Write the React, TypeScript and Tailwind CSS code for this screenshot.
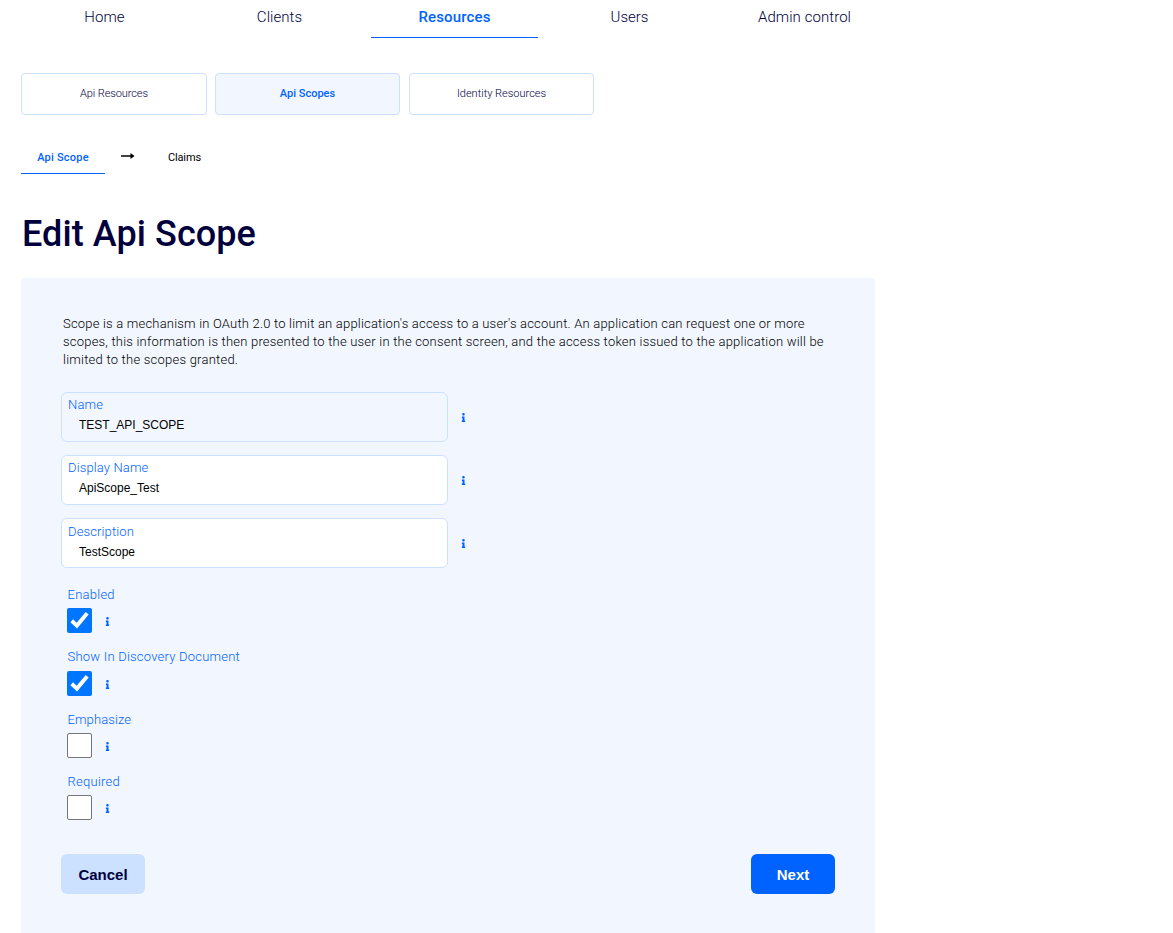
import { FaInfo } from 'react-icons/fa';

const tabs = [
  { label: 'Home', spacing: 'tracking-[0.05px]' },
  { label: 'Clients', spacing: 'tracking-[0.05px]' },
  { label: 'Resources', spacing: 'tracking-[0.15px]' },
  { label: 'Users', spacing: 'tracking-[0px]' },
  { label: 'Admin control', spacing: 'tracking-[0.07px]' },
];

const fields = [
  { label: 'Name', value: 'TEST_API_SCOPE', disabled: true, labelTop: 'pt-[3px]', spacing: 'tracking-[0.2px]' },
  { label: 'Display Name', value: 'ApiScope_Test', disabled: false, labelTop: 'pt-[3px]', spacing: 'tracking-[0.13px]' },
  { label: 'Description', value: 'TestScope', disabled: false, labelTop: 'pt-[4px]', spacing: 'tracking-[0.13px]' },
];

const options = [
  { label: 'Enabled', checked: true, height: 'h-[62px]', gap: 'mt-[4px]', spacing: 'tracking-[0.25px]' },
  { label: 'Show In Discovery Document', checked: true, height: 'h-[63px]', gap: 'mt-[5px]', spacing: 'tracking-[0.22px]' },
  { label: 'Emphasize', checked: false, height: 'h-[62px]', gap: 'mt-[4px]', spacing: 'tracking-[0.1px]' },
  { label: 'Required', checked: false, height: 'h-[73px]', gap: 'mt-[4px]', spacing: 'tracking-[0.25px]' },
];

function Check({ checked }: { checked: boolean }) {
  return checked ? (
    <span className="flex h-[25px] w-[25px] rounded-[2px] bg-[#0075ff]">
      <svg viewBox="0 0 25 25" className="h-[25px] w-[25px]" fill="none" stroke="#fff" strokeWidth="3.9">
        <path d="M4.7 12.8 L9.9 17.6 L20.2 5.2" />
      </svg>
    </span>
  ) : (
    <span className="h-[25px] w-[25px] rounded-[2px] border border-[#767676] bg-white" />
  );
}

export default function App() {
  return (
    <div className="h-[933px] w-[1173px] overflow-hidden bg-white font-['Roboto','Liberation_Sans',sans-serif] text-[#00003c]">
      <nav className="ml-[21px] flex h-[38px] gap-[8px]">
        {tabs.map((t) => (
          <a
            key={t.label}
            className={`flex h-[38px] w-[167px] justify-center border-b pt-[7px] text-[15px] leading-[20px] ${t.spacing} ${
              t.label === 'Resources' ? 'border-[#0062ff] font-medium text-[#0062ff]' : 'border-transparent font-light'
            }`}
          >
            <span>{t.label}</span>
          </a>
        ))}
      </nav>

      <div className="ml-[21px] mt-[35px] flex h-[42px] text-[11px] leading-[14px]">
        <a className="flex w-[186px] items-center justify-center rounded-[4px] border border-[#cce0ff] font-light tracking-[-0.1px]">
          <span>Api Resources</span>
        </a>
        <a className="ml-[8px] flex w-[185px] items-center justify-center rounded-[4px] border border-[#cce0ff] bg-[#f2f7ff] font-medium text-[#0062ff]">
          <span>Api Scopes</span>
        </a>
        <a className="ml-[9px] flex w-[185px] items-center justify-center rounded-[4px] border border-[#cce0ff] font-light">
          <span>Identity Resources</span>
        </a>
      </div>

      <div className="ml-[21px] mt-[26px] flex h-[33px] text-[11px] leading-[14px]">
        <span className="flex w-[84px] justify-center border-b border-[#0062ff] pt-[10px] font-medium tracking-[0.22px] text-[#0062ff]">
          <span>Api Scope</span>
        </span>
        <svg viewBox="0 0 14 8" className="ml-[16px] mt-[11px] h-[8px] w-[14px]" fill="#000">
          <path d="M0 3.2h9.5V1L13.5 4l-4 3V4.8H0z" />
        </svg>
        <span className="ml-[33px] pt-[10px] tracking-[-0.15px] text-black">Claims</span>
      </div>

      <h1 className="ml-[22px] mt-[37px] h-[46px] text-[36px] font-medium leading-[46px] tracking-[0.08px]">
        Edit Api Scope
      </h1>

      <main className="ml-[21px] mt-[21px] h-[655px] w-[854px] rounded-t-[4px] bg-[#f2f7ff] px-[40px] pt-[37px]">
        <div className="h-[54px] whitespace-nowrap pl-[2px] text-[13px] font-light leading-[18px] text-black">
          <p className="tracking-[0.197px]">
            Scope is a mechanism in OAuth 2.0 to limit an application's access to a user's account. An application can request one or more
          </p>
          <p className="tracking-[0.21px]">
            scopes, this information is then presented to the user in the consent screen, and the access token issued to the application will be
          </p>
          <p className="tracking-[0.23px]">limited to the scopes granted.</p>
        </div>

        <div className="mt-[23px] flex flex-col gap-[13px]">
          {fields.map((f) => (
            <div key={f.label} className="flex h-[50px] items-center">
              <label
                className={`flex h-[50px] w-[387px] flex-col rounded-[6px] border border-[#cce0ff] ${
                  f.disabled ? 'bg-[#f2f7ff]' : 'bg-white'
                } ${f.labelTop}`}
              >
                <span className={`pl-[6px] text-[13px] font-light leading-[18px] text-[#0062ff] ${f.spacing}`}>
                  {f.label}
                </span>
                <span className="pl-[17px] pt-[3px] font-['Liberation_Sans',Arial,sans-serif] text-[12px] leading-[16px] text-black">
                  {f.value}
                </span>
              </label>
              <FaInfo className="ml-[11px] h-[9px] w-[9px] text-[#0062ff]" />
            </div>
          ))}
        </div>

        <div className="mt-[18px] pl-[6px]">
          {options.map((o) => (
            <div key={o.label} className={o.height}>
              <div className={`pl-[0.5px] text-[13px] font-light leading-[18px] text-[#0062ff] ${o.spacing}`}>
                {o.label}
              </div>
              <div className={`flex items-center ${o.gap}`}>
                <Check checked={o.checked} />
                <FaInfo className="ml-[11px] mt-[2px] h-[9px] w-[9px] text-[#0062ff]" />
              </div>
            </div>
          ))}
        </div>

        <div className="mt-[8px] flex justify-between font-['Liberation_Sans',Arial,sans-serif] text-[15px] font-bold leading-[18px]">
          <button className="h-[40px] w-[84px] rounded-[6px] bg-[#cce0ff] pt-[1px] text-[#00003c]">Cancel</button>
          <button className="h-[40px] w-[84px] rounded-[6px] bg-[#0062ff] pt-[1px] text-white">Next</button>
        </div>
      </main>
    </div>
  );
}
